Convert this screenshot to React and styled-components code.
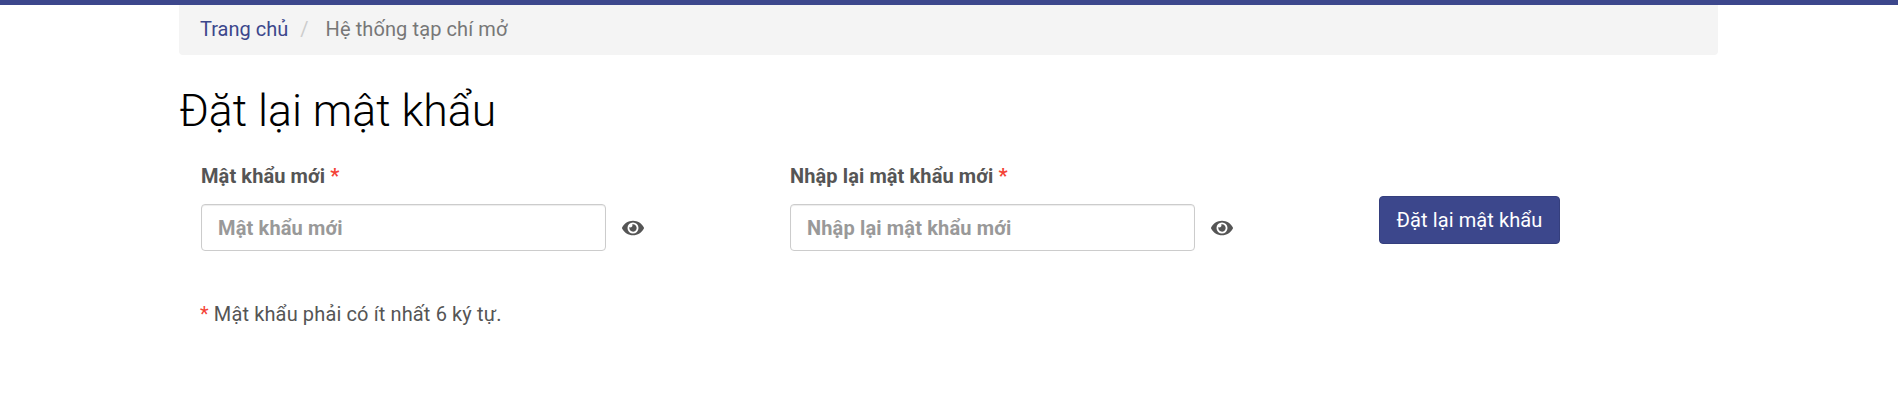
import styled, { createGlobalStyle } from "styled-components";
import { FaEye } from "react-icons/fa";

const PRIMARY = "#3c478c";

const GlobalStyle = createGlobalStyle`
  * {
    box-sizing: border-box;
  }
  body {
    margin: 0;
    background: #fff;
    font-family: Roboto, "Liberation Sans", sans-serif;
    letter-spacing: 0.1px;
    color: #555;
  }
`;

const Field = ({ label, placeholder }) => (
  <FieldColumn>
    <Label>
      {label} <Star>*</Star>
    </Label>
    <InputRow>
      <Input type="password" placeholder={placeholder} />
      <EyeButton>
        <FaEye size={22} />
      </EyeButton>
    </InputRow>
  </FieldColumn>
);

export default function App() {
  return (
    <>
      <GlobalStyle />
      <TopBar />
      <Container>
        <Breadcrumb>
          <Crumb href="#">Trang chủ</Crumb>
          <Separator>/</Separator>
          <Current>Hệ thống tạp chí mở</Current>
        </Breadcrumb>
        <Title>Đặt lại mật khẩu</Title>
        <FormRow>
          <Field label="Mật khẩu mới" placeholder="Mật khẩu mới" />
          <Field label="Nhập lại mật khẩu mới" placeholder="Nhập lại mật khẩu mới" />
          <SubmitButton>Đặt lại mật khẩu</SubmitButton>
        </FormRow>
        <Note>
          <NoteStar>*</NoteStar> Mật khẩu phải có ít nhất 6 ký tự.
        </Note>
      </Container>
    </>
  );
}

const TopBar = styled.div`
  height: 5px;
  background: ${PRIMARY};
`;

const Container = styled.div`
  width: 1539px;
  margin-left: 179px;
`;

const Breadcrumb = styled.nav`
  height: 50px;
  padding: 0 21px 2px;
  display: flex;
  align-items: center;
  background: #f4f4f4;
  border-radius: 0 0 4px 4px;
  font-size: 20px;
`;

const Crumb = styled.a`
  color: ${PRIMARY};
  letter-spacing: 0;
  text-decoration: none;
`;

const Separator = styled.span`
  margin: 0 17px 0 12px;
  color: #ccc;
`;

const Current = styled.span`
  color: #777;
`;

const Title = styled.h1`
  margin: 29px 0 0;
  font-size: 44.6px;
  line-height: 54px;
  font-weight: 300;
  letter-spacing: 0;
  color: #000;
`;

const FormRow = styled.div`
  margin-top: 23px;
  padding-left: 22px;
  display: grid;
  grid-template-columns: 589px 589px 181px;
`;

const FieldColumn = styled.div`
  display: flex;
  flex-direction: column;
`;

const Label = styled.label`
  font-size: 20px;
  line-height: 30px;
  font-weight: 700;
  color: #555;
`;

const Star = styled.span`
  color: #f44336;
`;

const InputRow = styled.div`
  margin-top: 13px;
  display: flex;
  align-items: center;
`;

const Input = styled.input`
  width: 405px;
  height: 47px;
  padding: 0 16px;
  border: 1px solid #ccc;
  border-radius: 4px;
  font-family: inherit;
  font-size: 20px;
  font-weight: 700;
  letter-spacing: 0.15px;
  color: #555;
  box-shadow: inset 0 1px 1px rgba(0, 0, 0, 0.075);
  &::placeholder {
    color: #999;
    opacity: 1;
  }
`;

const EyeButton = styled.span`
  margin-left: 16px;
  display: flex;
  color: #555;
`;

const SubmitButton = styled.button`
  margin-top: 35px;
  height: 48px;
  align-self: start;
  padding: 0;
  border: 1px solid #353f7d;
  border-radius: 4px;
  background: ${PRIMARY};
  color: #fff;
  font-family: inherit;
  font-size: 20px;
  letter-spacing: inherit;
`;

const Note = styled.p`
  margin: 48px 0 0;
  padding-left: 21px;
  font-size: 20px;
  line-height: 30px;
  letter-spacing: 0.13px;
  color: #555;
`;

const NoteStar = styled.span`
  color: #f44336;
`;
